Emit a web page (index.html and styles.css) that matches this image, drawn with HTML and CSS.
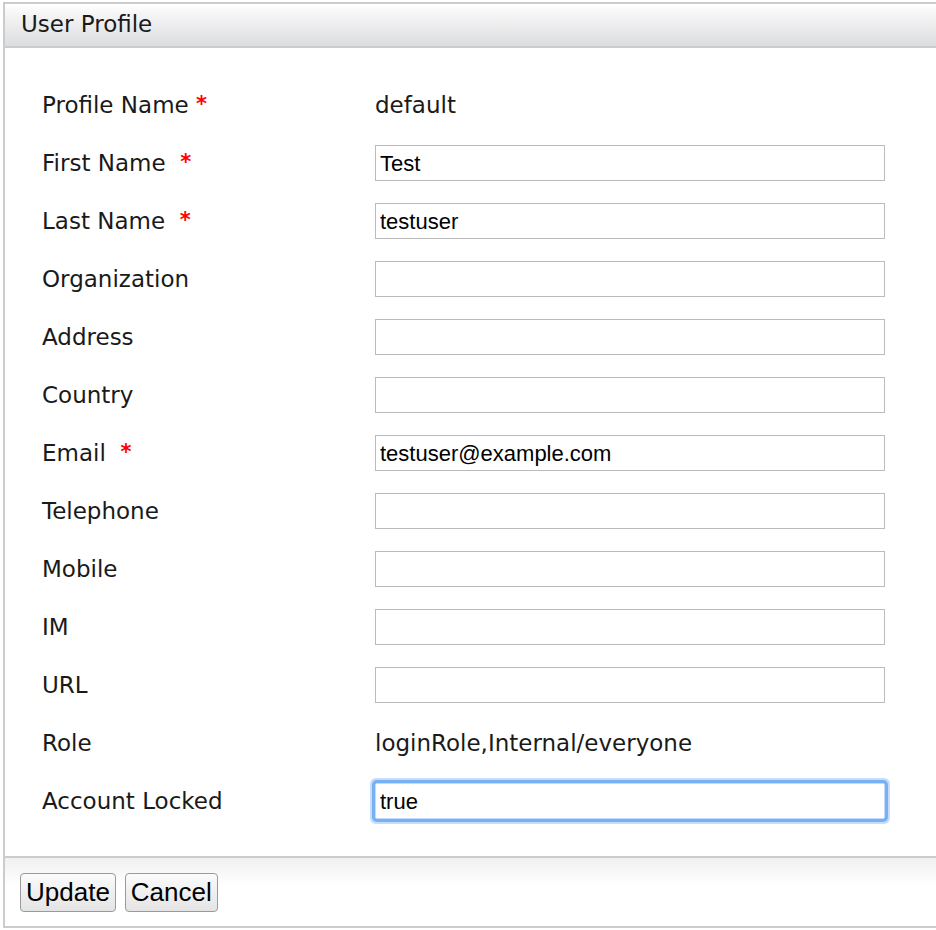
FILE: index.html
```html
<!DOCTYPE html>
<html>
<head>
<meta charset="utf-8">
<link rel="stylesheet" href="styles.css">
</head>
<body>
<div class="panel">
  <div class="panel-head">User Profile</div>
  <div class="panel-body">
    <div class="row"><div class="label">Profile Name <span class="req">*</span></div><div class="value">default</div></div>
    <div class="row"><div class="label">First Name&nbsp; <span class="req">*</span></div><div class="field"><input class="input" type="text" value="Test"></div></div>
    <div class="row"><div class="label">Last Name&nbsp; <span class="req">*</span></div><div class="field"><input class="input" type="text" value="testuser"></div></div>
    <div class="row"><div class="label">Organization</div><div class="field"><input class="input" type="text" value=""></div></div>
    <div class="row"><div class="label">Address</div><div class="field"><input class="input" type="text" value=""></div></div>
    <div class="row"><div class="label">Country</div><div class="field"><input class="input" type="text" value=""></div></div>
    <div class="row"><div class="label">Email&nbsp; <span class="req">*</span></div><div class="field"><input class="input" type="text" value="testuser@example.com"></div></div>
    <div class="row"><div class="label">Telephone</div><div class="field"><input class="input" type="text" value=""></div></div>
    <div class="row"><div class="label">Mobile</div><div class="field"><input class="input" type="text" value=""></div></div>
    <div class="row"><div class="label">IM</div><div class="field"><input class="input" type="text" value=""></div></div>
    <div class="row"><div class="label">URL</div><div class="field"><input class="input" type="text" value=""></div></div>
    <div class="row"><div class="label">Role</div><div class="value">loginRole,Internal/everyone</div></div>
    <div class="row"><div class="label">Account Locked</div><div class="field"><input class="input focused" type="text" value="true"></div></div>
  </div>
  <div class="panel-foot">
    <button class="btn" type="button">Update</button>
    <button class="btn" type="button">Cancel</button>
  </div>
</div>
</body>
</html>
```

FILE: styles.css
```css
html, body {
  margin: 0;
  padding: 0;
  background: #fff;
}
body {
  padding: 2px 0 0 3px;
  font-family: "DejaVu Sans", "Liberation Sans", sans-serif;
  color: #1a1a1a;
}
.panel {
  border: 2px solid #cccccc;
  border-right: none;
  width: 933px;
  box-sizing: border-box;
}
.panel-head {
  height: 44px;
  box-sizing: border-box;
  padding: 7px 0 0 16px;
  font-size: 23px;
  background: linear-gradient(#ffffff, #f3f3f4 30%, #dcdddf);
  border-bottom: 2px solid #cccccc;
}
.panel-body {
  padding: 28px 0 26px 37px;
}
.row {
  display: grid;
  grid-template-columns: 333px 510px;
  height: 58px;
  align-items: center;
}
.label {
  font-size: 23px;
  white-space: pre;
}
.req {
  color: #ff0000;
  font-size: 21px;
  font-weight: bold;
  position: relative;
  top: -2px;
}
.value {
  font-size: 23px;
}
.field {
  display: flex;
}
.input {
  width: 510px;
  height: 36px;
  box-sizing: border-box;
  border: 1px solid #bbbbbb;
  padding: 2px 4px 0 4px;
  margin: 0;
  font-family: "Liberation Sans", Arial, sans-serif;
  font-size: 22px;
  color: #000;
  outline: none;
  background: #fff;
}
.input.focused {
  border: 1px solid #c4dcfa;
  border-radius: 2px;
  box-shadow: 0 0 0 3px #78b0f4, 0 0 0 5px #c6ddfb;
}
.panel-foot {
  border-top: 2px solid #cccccc;
  height: 70px;
  box-sizing: border-box;
  padding: 15px 0 0 15px;
  display: flex;
  align-items: flex-start;
  gap: 9px;
  background: linear-gradient(#f0f0f0, #ffffff 40%);
}
.btn {
  font-family: "Liberation Sans", Arial, sans-serif;
  font-size: 26px;
  color: #000;
  height: 39px;
  padding: 0 5px;
  margin: 0;
  border: 1px solid #9a9a9a;
  border-radius: 4px;
  background: linear-gradient(#fbfbfb, #e4e4e4);
}
```
